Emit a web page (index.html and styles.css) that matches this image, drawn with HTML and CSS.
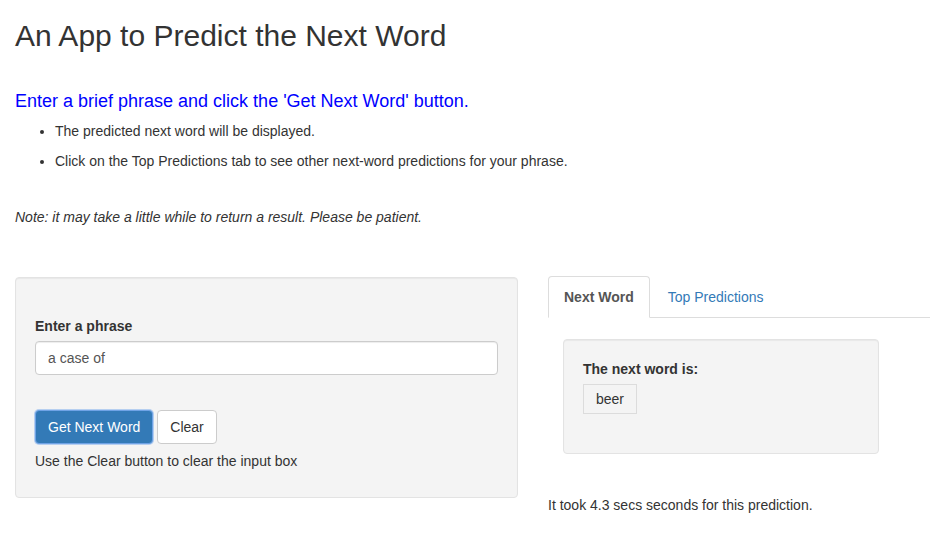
FILE: index.html
```html
<!DOCTYPE html>
<html lang="en">
<head>
<meta charset="utf-8">
<title>An App to Predict the Next Word</title>
<link rel="stylesheet" href="styles.css">
</head>
<body>
<div class="container">
  <h2 class="title">An App to Predict the Next Word</h2>
  <h4 class="lead-blue">Enter a brief phrase and click the 'Get Next Word' button.</h4>
  <ul class="bullets">
    <li>The predicted next word will be displayed.</li>
    <li>Click on the Top Predictions tab to see other next-word predictions for your phrase.</li>
  </ul>
  <p class="note">Note: it may take a little while to return a result. Please be patient.</p>

  <div class="row">
    <div class="sidebar well">
      <div class="form-group">
        <label class="control-label" for="phrase">Enter a phrase</label>
        <input id="phrase" class="form-control" type="text" value="a case of">
      </div>
      <div class="buttons">
        <button class="btn btn-primary" type="button">Get Next Word</button>
        <button class="btn btn-default" type="button">Clear</button>
      </div>
      <span class="help-block">Use the Clear button to clear the input box</span>
    </div>

    <div class="main">
      <ul class="nav-tabs">
        <li class="tab active"><a>Next Word</a></li>
        <li class="tab"><a>Top Predictions</a></li>
      </ul>
      <div class="tab-content">
        <div class="well result">
          <label class="control-label">The next word is:</label>
          <div class="word-box">beer</div>
        </div>
        <p class="timing">It took 4.3 secs seconds for this prediction.</p>
      </div>
    </div>
  </div>
</div>
</body>
</html>
```

FILE: styles.css
```css
* { box-sizing: border-box; }

html, body {
  margin: 0;
  padding: 0;
  background: #fff;
}

body {
  font-family: "Liberation Sans", Arial, Helvetica, sans-serif;
  font-size: 14px;
  line-height: 20px;
  color: #333;
}

.container {
  padding: 0 0 0 15px;
}

.title {
  font-size: 30px;
  font-weight: 500;
  line-height: 33px;
  margin: 19px 0 0 0;
  color: #333;
}

.lead-blue {
  font-size: 18px;
  font-weight: 500;
  line-height: 20px;
  color: #0000ff;
  margin: 39px 0 0 0;
}

.bullets {
  margin: 10px 0 0 0;
  padding-left: 40px;
}

.bullets li {
  line-height: 20px;
  margin-bottom: 10px;
}

.note {
  font-style: italic;
  margin: 36px 0 0 0;
  line-height: 20px;
}

.row {
  display: flex;
  align-items: flex-start;
  margin-top: 49px;
}

.well {
  background: #f4f4f4;
  border: 1px solid #e3e3e3;
  border-radius: 4px;
  box-shadow: inset 0 1px 1px rgba(0, 0, 0, .05);
  padding: 19px;
}

.sidebar {
  width: 503px;
  flex: none;
  padding-top: 38px;
  margin-top: 1px;
}

.control-label {
  display: inline-block;
  font-weight: 700;
  margin-bottom: 5px;
  line-height: 20px;
}

.form-group {
  margin-bottom: 35px;
}

.form-control {
  display: block;
  width: 100%;
  height: 34px;
  padding: 6px 12px;
  font-family: inherit;
  font-size: 14px;
  line-height: 20px;
  color: #555;
  background: #fff;
  border: 1px solid #ccc;
  border-radius: 4px;
  box-shadow: inset 0 1px 1px rgba(0, 0, 0, .075);
  margin: 0;
}

.buttons {
  display: flex;
  gap: 4px;
}

.btn {
  font-family: inherit;
  font-size: 14px;
  line-height: 20px;
  height: 34px;
  padding: 6px 12px;
  border: 1px solid transparent;
  border-radius: 4px;
  margin: 0;
  cursor: pointer;
}

.btn-primary {
  color: #fff;
  background: #337ab7;
  border-color: #6fa3e6;
  box-shadow: 0 0 0 1px rgba(120, 170, 235, .5);
}

.btn-default {
  color: #333;
  background: #fff;
  border-color: #ccc;
}

.help-block {
  display: block;
  margin: 7px 0 7px 0;
  color: #333;
}

.main {
  flex: 1;
  margin-left: 30px;
}

.nav-tabs {
  list-style: none;
  margin: 0;
  padding: 0;
  display: flex;
  border-bottom: 1px solid #ddd;
}

.tab {
  margin-right: 2px;
  margin-bottom: -1px;
}

.tab a {
  display: block;
  padding: 10px 15px;
  line-height: 20px;
  border: 1px solid transparent;
  border-radius: 4px 4px 0 0;
  color: #337ab7;
}

.tab.active a {
  color: #555;
  font-weight: 700;
  background: #fff;
  border-color: #ddd;
  border-bottom-color: transparent;
}

.tab-content {
  padding-left: 15px;
}

.result {
  width: 316px;
  margin-top: 21px;
  margin-bottom: 0;
}

.word-box {
  border: 1px solid #dcdcdc;
  padding: 4px 12px;
  line-height: 20px;
  color: #333;
  display: block;
  width: max-content;
  margin-bottom: 20px;
}

.timing {
  margin: 41px 0 0 -15px;
  line-height: 20px;
}
```
